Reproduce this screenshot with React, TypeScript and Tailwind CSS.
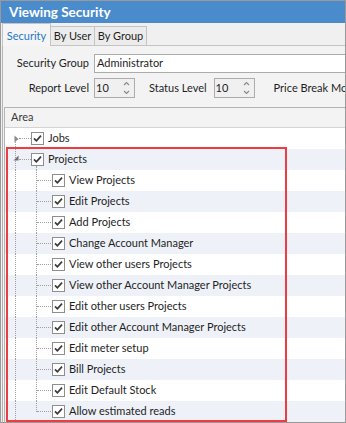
const CHILDREN = [
  "View Projects",
  "Edit Projects",
  "Add Projects",
  "Change Account Manager",
  "View other users Projects",
  "View other Account Manager Projects",
  "Edit other users Projects",
  "Edit other Account Manager Projects",
  "Edit meter setup",
  "Bill Projects",
  "Edit Default Stock",
  "Allow estimated reads",
];

function CheckBox() {
  return (
    <span className="flex h-[13px] w-[13px] shrink-0 items-center justify-center border border-[#8e8e8e] bg-white">
      <svg width="11" height="11" viewBox="0 0 11 11">
        <path d="M2 5.3 L4.4 7.8 L9 2.6" fill="none" stroke="#3a3a3a" strokeWidth="1.7" />
      </svg>
    </span>
  );
}

function Spinner({ value }: { value: string }) {
  return (
    <div className="flex h-[20px] w-[41px] shrink-0 items-center justify-between border border-[#acacac] bg-[#f0f0f0] pl-[1px] pr-[4px]">
      <span>{value}</span>
      <svg width="7" height="14" viewBox="0 0 7 14">
        <path d="M1 4 L3.5 1.5 L6 4" fill="none" stroke="#8a8a8a" strokeWidth="1.2" />
        <path d="M1 10 L3.5 12.5 L6 10" fill="none" stroke="#8a8a8a" strokeWidth="1.2" />
      </svg>
    </div>
  );
}

function TreeRow({
  index,
  level,
  label,
  children,
}: {
  index: number;
  level: 0 | 1;
  label: string;
  children?: React.ReactNode;
}) {
  return (
    <div
      className={`relative flex h-[21px] items-center ${
        index % 2 === 1 ? "bg-[#eef2f8]" : "bg-white"
      } ${level === 0 ? "pl-[26px]" : "pl-[47px]"}`}
    >
      {children}
      <CheckBox />
      <span className="ml-[4px] whitespace-nowrap">{label}</span>
    </div>
  );
}

export default function App() {
  return (
    <div
      className="relative h-[423px] w-[346px] overflow-hidden border border-[#999999] bg-[#f0f0f0] text-[11px] text-[#1e1e1e]"
      style={{ fontFamily: "Lato, 'Open Sans', sans-serif" }}
    >
      {/* Title bar */}
      <div className="flex h-[22px] items-center bg-[#4a8ccb] pl-[8px] text-[13.5px] font-bold text-white">
        Viewing Security
      </div>

      {/* Tabs */}
      <div className="flex h-[23px] items-end pl-[1px]">
        <div className="flex h-[23px] w-[49px] shrink-0 items-center justify-center border-x border-t border-[#c4c4c4] bg-[#f5f5f5] pt-[3px] text-[#1f78c8]">
          Security
        </div>
        <div className="flex h-[20px] w-[44px] shrink-0 items-center justify-center border-y border-r border-[#c4c4c4] bg-[#ececec]">
          By User
        </div>
        <div className="flex h-[20px] w-[52px] shrink-0 items-center justify-center border-y border-r border-[#c4c4c4] bg-[#ececec]">
          By Group
        </div>
        <div className="h-[20px] flex-1 border-b border-[#c4c4c4]" />
      </div>

      {/* Panel */}
      <div className="ml-[1px] h-full border-l border-[#b4b4b4] bg-[#f3f3f3]">
        <div className="flex items-center pt-[8px]">
          <span className="w-[86px] shrink-0 text-right">Security Group</span>
          <div className="ml-[5px] flex h-[19px] w-[300px] shrink-0 items-center border border-[#acacac] bg-white pl-[2px]">
            Administrator
          </div>
        </div>
        <div className="mt-[5px] flex items-center whitespace-nowrap">
          <span className="w-[86px] shrink-0 text-right">Report Level</span>
          <div className="ml-[5px] shrink-0">
            <Spinner value="10" />
          </div>
          <span className="ml-[14px] shrink-0">Status Level</span>
          <div className="ml-[7px] shrink-0">
            <Spinner value="10" />
          </div>
          <span className="ml-[19px] shrink-0">Price Break Movement</span>
        </div>

        {/* Grid */}
        <div className="ml-[1px] mt-[9px] h-full border-l border-t border-[#b4b4b4] bg-white">
          <div className="flex h-[20px] items-center border-b border-[#d4d4d4] bg-[#f3f3f3] pl-[6px] text-[#3a3a3a]">
            Area
          </div>

          <TreeRow index={0} level={0} label="Jobs">
            <span className="absolute left-[10px] top-[14px] h-[7px] border-l border-dotted border-[#a0a0a0]" />
            <span className="absolute left-[14px] top-[10px] w-[12px] border-t border-dotted border-[#a0a0a0]" />
            <svg className="absolute left-[9px] top-[7px]" width="5" height="8" viewBox="0 0 5 8">
              <path d="M0.5 0.5 L4.5 4 L0.5 7.5 Z" fill="#8c8c8c" />
            </svg>
          </TreeRow>

          <TreeRow index={1} level={0} label="Projects">
            <span className="absolute left-[10px] top-0 h-[21px] border-l border-dotted border-[#a0a0a0]" />
            <span className="absolute left-[14px] top-[10px] w-[12px] border-t border-dotted border-[#a0a0a0]" />
            <span className="absolute left-[31px] top-[17px] h-[4px] border-l border-dotted border-[#a0a0a0]" />
            <svg className="absolute left-[8px] top-[6px]" width="6" height="6" viewBox="0 0 6 6">
              <path d="M5.5 0.5 L5.5 5.5 L0.5 5.5 Z" fill="#6e6e6e" />
            </svg>
          </TreeRow>

          {CHILDREN.map((label, i) => {
            const last = i === CHILDREN.length - 1;
            return (
              <TreeRow key={label} index={i + 2} level={1} label={label}>
                <span className="absolute left-[10px] top-0 h-[21px] border-l border-dotted border-[#a0a0a0]" />
                <span
                  className={`absolute left-[31px] top-0 border-l border-dotted border-[#a0a0a0] ${
                    last ? "h-[11px]" : "h-[21px]"
                  }`}
                />
                <span className="absolute left-[32px] top-[10px] w-[14px] border-t border-dotted border-[#a0a0a0]" />
              </TreeRow>
            );
          })}
        </div>
      </div>

      {/* Highlight box */}
      <div className="pointer-events-none absolute left-[5px] top-[146px] h-[275px] w-[281px] border-2 border-[#ee3d42]" />
    </div>
  );
}
